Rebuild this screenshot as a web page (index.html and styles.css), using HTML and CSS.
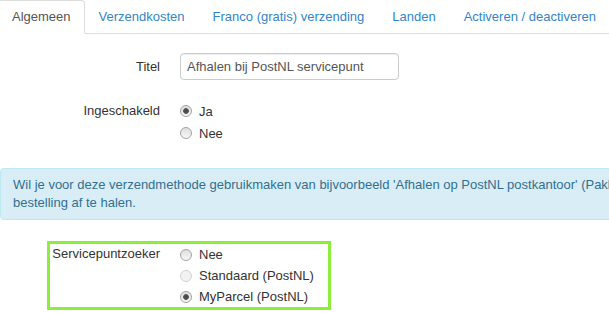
FILE: index.html
```html
<!DOCTYPE html>
<html lang="nl">
<head>
    <meta charset="UTF-8">
    <meta name="viewport" content="width=device-width, initial-scale=1.0">
    <title>Verzendmethode bewerken</title>
    <link rel="stylesheet" href="styles.css">
</head>
<body>

    <!-- tabs -->
    <ul class="nav-tabs">
        <li class="active"><a href="#">Algemeen</a></li>
        <li><a href="#">Verzendkosten</a></li>
        <li><a href="#">Franco (gratis) verzending</a></li>
        <li><a href="#">Landen</a></li>
        <li><a href="#">Activeren / deactiveren</a></li>
    </ul>

    <div class="tab-content">
        <div class="form-row">
            <label class="row-label" for="titel">Titel</label>
            <input class="text-input" type="text" id="titel" value="Afhalen bij PostNL servicepunt">
        </div>

        <div class="form-row radio-row">
            <span class="row-label">Ingeschakeld</span>
            <div class="radio-list">
                <label class="radio"><input type="radio" name="enabled" checked> Ja</label>
                <label class="radio"><input type="radio" name="enabled"> Nee</label>
            </div>
        </div>

        <!-- info block -->
        <div class="alert">
            <p>Wil je voor deze verzendmethode gebruikmaken van bijvoorbeeld 'Afhalen op PostNL postkantoor' (Pakketpunt)? Dan kan de klant een servicepunt kiezen om de</p>
            <p>bestelling af te halen.</p>
        </div>

        <div class="form-row radio-row highlight">
            <span class="row-label">Servicepuntzoeker</span>
            <div class="radio-list">
                <label class="radio"><input type="radio" name="finder"> Nee</label>
                <label class="radio disabled"><input type="radio" name="finder" disabled> Standaard (PostNL)</label>
                <label class="radio"><input type="radio" name="finder" checked> MyParcel (PostNL)</label>
            </div>
        </div>
    </div>

</body>
</html>
```

FILE: styles.css
```css
/* General styling */
body {
    font-family: 'Liberation Sans', Arial, sans-serif;
    font-size: 13px;
    color: #333;
    background-color: #fff;
    margin: 0;
    padding: 0;
    overflow: hidden;
}

/* Tabs */
.nav-tabs {
    list-style: none;
    display: flex;
    margin: 0 0 0 -2px;
    padding: 0;
    height: 33px;
    border-bottom: 1px solid #ddd;
}

.nav-tabs li {
    flex-shrink: 0;
    margin-bottom: -1px;
}

.nav-tabs a {
    display: block;
    padding: 6px 13px;
    line-height: 20px;
    white-space: nowrap;
    color: #3385c6;
    text-decoration: none;
    border: 1px solid transparent;
    border-radius: 4px 4px 0 0;
}

.nav-tabs .active a {
    color: #555;
    background-color: #fff;
    border-color: #ddd;
    border-bottom-color: transparent;
}

/* Form rows */
.tab-content {
    padding-top: 19px;
}

.form-row {
    display: flex;
    align-items: center;
    gap: 20px;
}

.row-label {
    width: 160px;
    text-align: right;
    flex-shrink: 0;
}

.text-input {
    width: 219px;
    height: 27px;
    box-sizing: border-box;
    padding: 4px 6px;
    border: 1px solid #ccc;
    border-radius: 4px;
    font-family: inherit;
    font-size: 13px;
    color: #555;
    box-shadow: inset 0 1px 1px rgba(0, 0, 0, 0.075);
}

.radio-row {
    align-items: flex-start;
    margin-top: 20px;
}

.radio-row .row-label {
    line-height: 22px;
}

.radio-list {
    display: flex;
    flex-direction: column;
}

.radio {
    display: flex;
    align-items: center;
    height: 22px;
}

.radio input {
    appearance: none;
    -webkit-appearance: none;
    width: 12px;
    height: 12px;
    margin: 0 7px 0 0;
    border: 1px solid #a3a3a3;
    border-radius: 50%;
    background: linear-gradient(#dedede, #f7f7f7);
}

.radio input:checked {
    background: radial-gradient(circle, #444 0, #555 2.5px, transparent 3.2px), linear-gradient(#dedede, #f7f7f7);
}

.radio input:disabled {
    border-color: #d2d2d2;
    background: #f2f2f2;
}

/* Info block */
.alert {
    width: 900px;
    margin-top: 24px;
    padding: 7px 12px;
    background-color: #d9edf7;
    border: 1px solid #bce8f1;
    border-radius: 4px;
    color: #31708f;
}

.alert p {
    margin: 0;
    line-height: 18px;
    white-space: nowrap;
}

/* Marked row */
.highlight {
    width: 278px;
    margin: 21px 0 0 47px;
    border: 3px solid #8aee3a;
}

.highlight .row-label {
    width: 110px;
    line-height: 20px;
}

.highlight .radio {
    height: 21px;
}
```
